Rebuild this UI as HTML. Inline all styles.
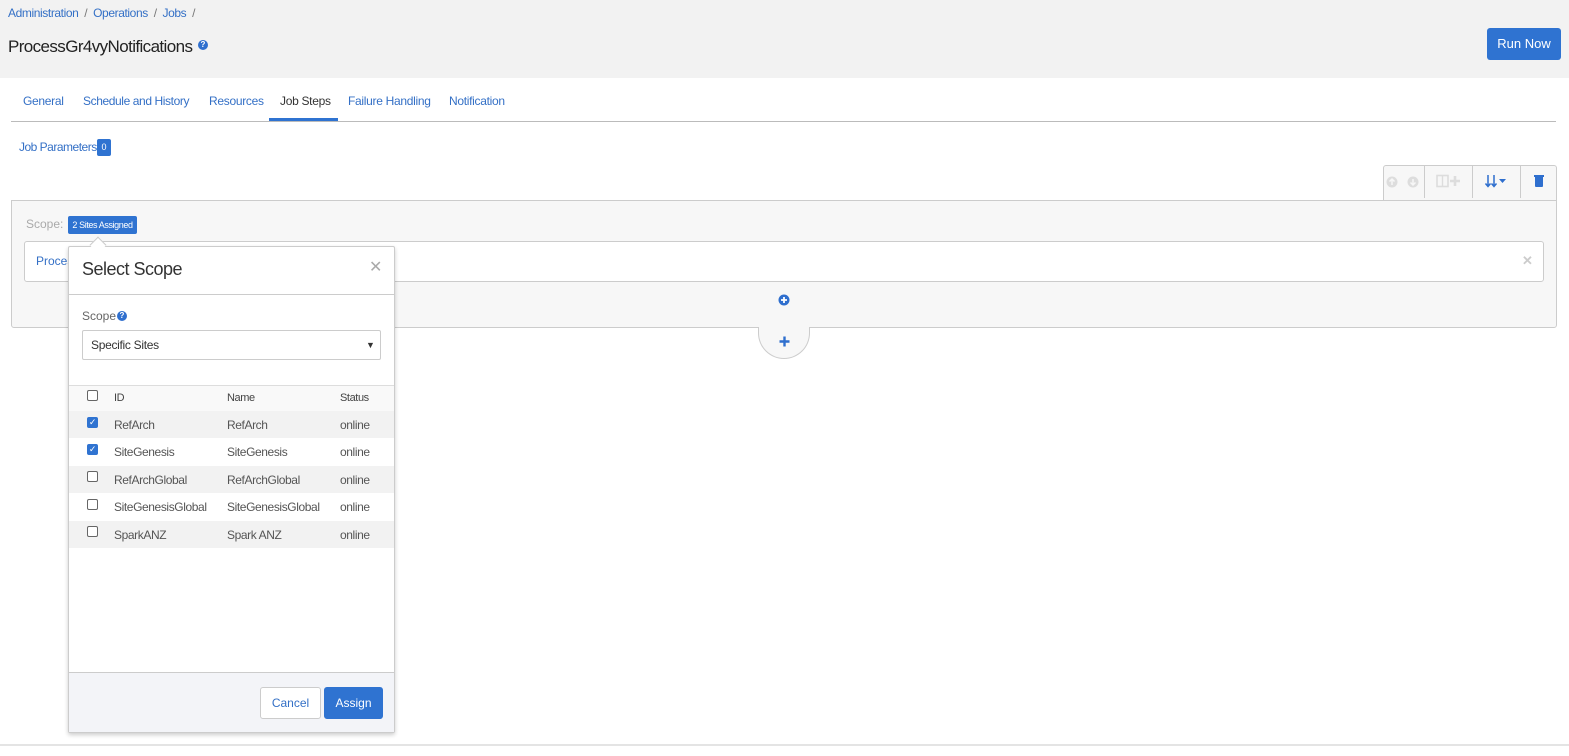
<!DOCTYPE html>
<html><head><meta charset="utf-8"><style>
*{box-sizing:border-box;margin:0;padding:0}
body{width:1569px;height:756px;position:relative;background:#fff;font-family:"Liberation Sans",sans-serif;overflow:hidden;color:#333}
.a{position:absolute}
.blue{color:#3470c6}
</style></head><body>
<div class="a" style="left:0;top:0;width:1569px;height:78px;background:#f2f2f2"></div>
<div class="a blue" style="left:8px;top:6px;font-size:12px;letter-spacing:-0.4px">Administration <span style="color:#777">&nbsp;/&nbsp;</span> Operations <span style="color:#777">&nbsp;/&nbsp;</span> Jobs <span style="color:#777">&nbsp;/</span></div>
<div class="a" style="left:8px;top:37px;font-size:17px;color:#222;letter-spacing:-0.6px">ProcessGr4vyNotifications</div>
<div class="a" style="left:198px;top:40px;width:10px;height:10px;border-radius:50%;background:#2f6fce;color:#fff;font-size:8px;font-weight:bold;text-align:center;line-height:10px">?</div>
<div class="a" style="left:1487px;top:28px;width:74px;height:32px;background:#2f73d1;border-radius:3px;color:#fff;font-size:13px;text-align:center;line-height:32px">Run Now</div>

<div class="a blue" style="left:23px;top:94px;font-size:12px;letter-spacing:-0.3px">General</div>
<div class="a blue" style="left:83px;top:94px;font-size:12px;letter-spacing:-0.4px">Schedule and History</div>
<div class="a blue" style="left:209px;top:94px;font-size:12px;letter-spacing:-0.3px">Resources</div>
<div class="a" style="left:280px;top:94px;font-size:12px;color:#333;letter-spacing:-0.3px">Job Steps</div>
<div class="a blue" style="left:348px;top:94px;font-size:12px;letter-spacing:-0.3px">Failure Handling</div>
<div class="a blue" style="left:449px;top:94px;font-size:12px;letter-spacing:-0.3px">Notification</div>
<div class="a" style="left:11px;top:121px;width:1545px;height:1px;background:#bbb"></div>
<div class="a" style="left:269px;top:118px;width:69px;height:3px;background:#2f73d1"></div>

<div class="a blue" style="left:19px;top:140px;font-size:12px;letter-spacing:-0.5px">Job Parameters</div>
<div class="a" style="left:97px;top:139px;width:14px;height:17px;background:#2f73d1;border-radius:2px;color:#fff;font-size:9px;text-align:center;line-height:17px">0</div>

<!-- toolbar -->
<div class="a" style="left:1383px;top:165px;width:174px;height:36px;background:#f7f7f7;border:1px solid #ccc;border-bottom:none;border-radius:3px 3px 0 0"></div>
<svg class="a" style="left:1385px;top:175px" width="36" height="14" viewBox="0 0 36 14">
<circle cx="7" cy="7" r="5.5" fill="#ddd"/><path d="M7 10V4M4.5 6.5 7 4l2.5 2.5" stroke="#f7f7f7" stroke-width="1.5" fill="none"/>
<circle cx="28" cy="7" r="5.5" fill="#ddd"/><path d="M28 4v6M25.5 7.5 28 10l2.5-2.5" stroke="#f7f7f7" stroke-width="1.5" fill="none"/>
</svg>
<div class="a" style="left:1424px;top:166px;width:1px;height:32px;background:#ccc"></div>
<svg class="a" style="left:1436px;top:174px" width="26" height="14" viewBox="0 0 26 14">
<rect x="1" y="1.5" width="11" height="11" fill="none" stroke="#ddd" stroke-width="1.6"/><path d="M6.5 1.5v11" stroke="#ddd" stroke-width="1.4"/>
<path d="M19 2v10M14 7h10" stroke="#ddd" stroke-width="2.6"/>
</svg>
<div class="a" style="left:1472px;top:166px;width:1px;height:32px;background:#ccc"></div>
<svg class="a" style="left:1485px;top:174px" width="24" height="14" viewBox="0 0 24 14">
<path d="M3 1v11M0.5 9.5 3 12.5l2.5-3M9 1v11M6.5 9.5 9 12.5l2.5-3" stroke="#2f6fce" stroke-width="1.5" fill="none"/>
<path d="M14 5h7l-3.5 4z" fill="#2f6fce"/>
</svg>
<div class="a" style="left:1520px;top:166px;width:1px;height:32px;background:#ccc"></div>
<div class="a" style="left:1535px;top:177px;width:8px;height:10px;background:#2f6fce;border-radius:0 0 1px 1px"></div>
<div class="a" style="left:1534px;top:175px;width:10px;height:2px;background:#2f6fce"></div>

<!-- panel -->
<div class="a" style="left:11px;top:200px;width:1546px;height:128px;background:#f7f7f7;border:1px solid #ccc;border-radius:0 0 3px 3px"></div>
<div class="a" style="left:26px;top:217px;font-size:12px;color:#aaa">Scope:</div>
<div class="a" style="left:68px;top:216px;width:69px;height:18px;background:#2f73d1;border-radius:2px;color:#fff;font-size:9px;text-align:center;line-height:18px;letter-spacing:-0.4px">2 Sites Assigned</div>
<div class="a" style="left:24px;top:241px;width:1520px;height:41px;background:#fff;border:1px solid #ccc;border-radius:3px"></div>
<div class="a blue" style="left:36px;top:254px;font-size:12px">Process</div>
<div class="a" style="left:1522px;top:253px;color:#ccc;font-size:13px;font-weight:bold">✕</div>
<svg class="a" style="left:778px;top:294px" width="12" height="12" viewBox="0 0 12 12"><circle cx="6" cy="6" r="5.5" fill="#2f6fce"/><path d="M6 3v6M3 6h6" stroke="#fff" stroke-width="1.8"/></svg>
<div class="a" style="left:758px;top:327px;width:52px;height:32px;background:#f7f7f7;border:1px solid #ccc;border-top:none;border-radius:0 0 26px 26px"></div>
<svg class="a" style="left:779px;top:336px" width="11" height="11" viewBox="0 0 11 11"><path d="M5.5 0.5v10M0.5 5.5h10" stroke="#2f6fce" stroke-width="2.4"/></svg>

<!-- modal -->
<div class="a" style="left:68px;top:246px;width:327px;height:487px;background:#fff;border:1px solid #ccc;box-shadow:0 2px 4px rgba(0,0,0,.2);border-radius:2px"></div>
<div class="a" style="left:92px;top:239px;width:12px;height:12px;background:#fff;border-left:1px solid #ccc;border-top:1px solid #ccc;transform:rotate(45deg)"></div>
<div class="a" style="left:82px;top:259px;font-size:18px;color:#333;letter-spacing:-0.5px">Select Scope</div>
<div class="a" style="left:369px;top:257px;font-size:16px;color:#aaa">✕</div>
<div class="a" style="left:69px;top:294px;width:325px;height:1px;background:#ccc"></div>
<div class="a" style="left:82px;top:309px;font-size:12px;color:#666">Scope</div>
<div class="a" style="left:117px;top:311px;width:10px;height:10px;border-radius:50%;background:#2f6fce;color:#fff;font-size:8px;font-weight:bold;text-align:center;line-height:10px">?</div>
<div class="a" style="left:82px;top:330px;width:299px;height:30px;border:1px solid #ccc;border-radius:2px"></div>
<div class="a" style="left:91px;top:338px;font-size:12px;color:#333;letter-spacing:-0.3px">Specific Sites</div>
<div class="a" style="left:366px;top:340px;font-size:9px;color:#333">▼</div>

<div class="a" style="left:69px;top:385px;width:325px;height:1px;background:#ddd"></div>
<div class="a" style="left:69px;top:386px;width:325px;height:25px;background:#f9f9f9"></div>
<div class="a" style="left:69px;top:411px;width:325px;height:27px;background:#f2f2f2"></div>
<div class="a" style="left:69px;top:466px;width:325px;height:27px;background:#f2f2f2"></div>
<div class="a" style="left:69px;top:521px;width:325px;height:27px;background:#f2f2f2"></div>
<div style="font-size:12px;color:#555;letter-spacing:-0.4px">
<div class="a" style="left:87px;top:390px;width:11px;height:11px;border:1px solid #666;border-radius:2px;background:#fff"></div>
<div class="a" style="left:114px;top:392px;font-size:11px;color:#444">ID</div><div class="a" style="left:227px;top:392px;font-size:11px;color:#444">Name</div><div class="a" style="left:340px;top:392px;font-size:11px;color:#444">Status</div>

<div class="a" style="left:87px;top:417px;width:11px;height:11px;background:#2f73d1;border-radius:2px;color:#fff;font-size:9px;line-height:11px;text-align:center">✓</div>
<div class="a" style="left:114px;top:418px">RefArch</div><div class="a" style="left:227px;top:418px">RefArch</div><div class="a" style="left:340px;top:418px">online</div>
<div class="a" style="left:87px;top:444px;width:11px;height:11px;background:#2f73d1;border-radius:2px;color:#fff;font-size:9px;line-height:11px;text-align:center">✓</div>
<div class="a" style="left:114px;top:445px">SiteGenesis</div><div class="a" style="left:227px;top:445px">SiteGenesis</div><div class="a" style="left:340px;top:445px">online</div>
<div class="a" style="left:87px;top:471px;width:11px;height:11px;border:1px solid #666;border-radius:2px;background:#fff"></div>
<div class="a" style="left:114px;top:473px">RefArchGlobal</div><div class="a" style="left:227px;top:473px">RefArchGlobal</div><div class="a" style="left:340px;top:473px">online</div>
<div class="a" style="left:87px;top:499px;width:11px;height:11px;border:1px solid #666;border-radius:2px;background:#fff"></div>
<div class="a" style="left:114px;top:500px">SiteGenesisGlobal</div><div class="a" style="left:227px;top:500px">SiteGenesisGlobal</div><div class="a" style="left:340px;top:500px">online</div>
<div class="a" style="left:87px;top:526px;width:11px;height:11px;border:1px solid #666;border-radius:2px;background:#fff"></div>
<div class="a" style="left:114px;top:528px">SparkANZ</div><div class="a" style="left:227px;top:528px">Spark ANZ</div><div class="a" style="left:340px;top:528px">online</div>
</div>

<div class="a" style="left:69px;top:672px;width:325px;height:60px;background:#f3f4f8;border-top:1px solid #ccc"></div>
<div class="a blue" style="left:260px;top:687px;width:61px;height:32px;background:#fff;border:1px solid #ccc;border-radius:3px;font-size:12px;text-align:center;line-height:30px">Cancel</div>
<div class="a" style="left:324px;top:687px;width:59px;height:32px;background:#2f73d1;border-radius:3px;color:#fff;font-size:12px;text-align:center;line-height:32px">Assign</div>

<div class="a" style="left:0;top:744px;width:1569px;height:12px;background:#fff;border-top:2px solid #e4e4e4"></div>
</body></html>
